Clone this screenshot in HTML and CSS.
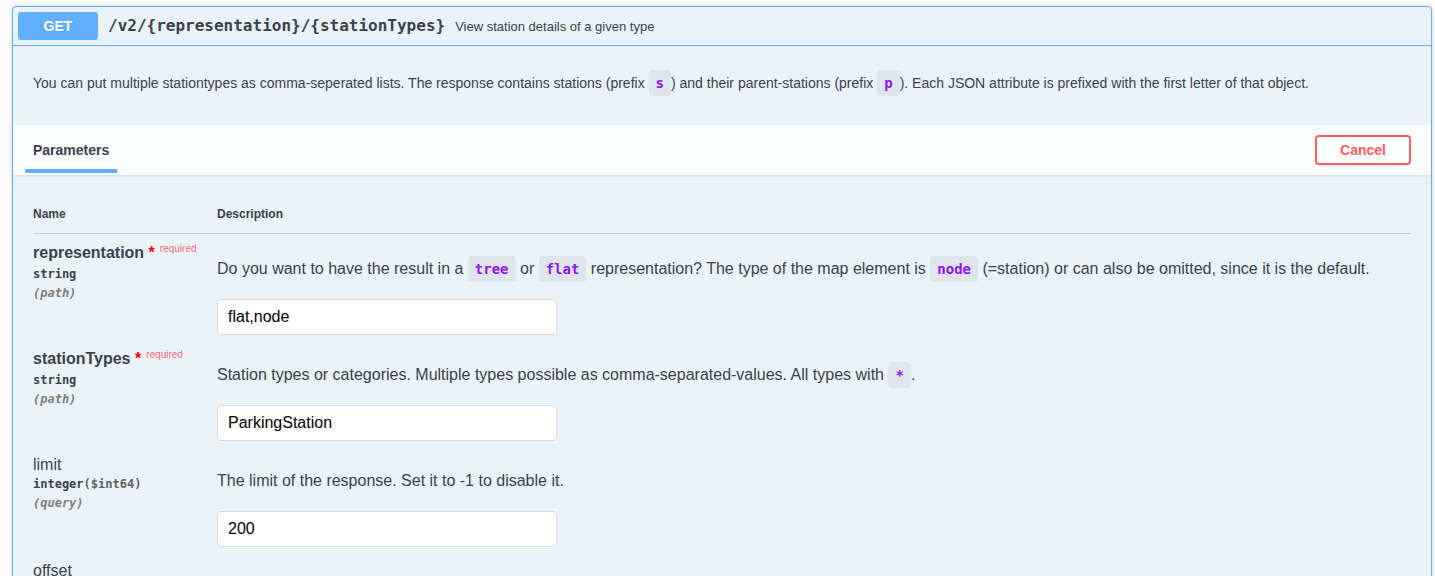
FILE: index.html
```html
<!DOCTYPE html>
<html lang="en">
<head>
<meta charset="utf-8">
<title>GET /v2/{representation}/{stationTypes}</title>
<link rel="stylesheet" href="styles.css">
</head>
<body>
<div class="opblock">
  <div class="summary">
    <span class="method">GET</span>
    <span class="path">/v2/{representation}/{stationTypes}</span>
    <span class="summary-desc">View station details of a given type</span>
  </div>
  <div class="desc-wrap">
    <p>You can put multiple stationtypes as comma-seperated lists. The response contains stations (prefix <code>s</code>) and their parent-stations (prefix <code>p</code>). Each JSON attribute is prefixed with the first letter of that object.</p>
  </div>
  <div class="section-header">
    <div class="tab"><h4><span>Parameters</span></h4></div>
    <button class="btn-cancel">Cancel</button>
  </div>
  <div class="params">
    <div class="params-head">
      <div>Name</div>
      <div>Description</div>
    </div>
    <div class="prow">
      <div class="pcol-name">
        <div class="pname required">representation<span class="star">&nbsp;*</span></div>
        <div class="ptype">string</div>
        <div class="pin">(path)</div>
      </div>
      <div class="pcol-desc">
        <p>Do you want to have the result in a <code>tree</code> or <code>flat</code> representation? The type of the map element is <code>node</code> (=station) or can also be omitted, since it is the default.</p>
        <input class="pinput" type="text" value="flat,node">
      </div>
    </div>
    <div class="prow">
      <div class="pcol-name">
        <div class="pname required">stationTypes<span class="star">&nbsp;*</span></div>
        <div class="ptype">string</div>
        <div class="pin">(path)</div>
      </div>
      <div class="pcol-desc">
        <p>Station types or categories. Multiple types possible as comma-separated-values. All types with <code>*</code>.</p>
        <input class="pinput" type="text" value="ParkingStation">
      </div>
    </div>
    <div class="prow">
      <div class="pcol-name">
        <div class="pname">limit</div>
        <div class="ptype">integer<span class="pformat">($int64)</span></div>
        <div class="pin">(query)</div>
      </div>
      <div class="pcol-desc">
        <p>The limit of the response. Set it to -1 to disable it.</p>
        <input class="pinput" type="text" value="200">
      </div>
    </div>
    <div class="prow">
      <div class="pcol-name">
        <div class="pname">offset</div>
        <div class="ptype">integer<span class="pformat">($int64)</span></div>
        <div class="pin">(query)</div>
      </div>
      <div class="pcol-desc">
        <p>The offset of the response. Set it to 0 to start at the first element.</p>
        <input class="pinput" type="text" value="0">
      </div>
    </div>
  </div>
</div>
</body>
</html>
```

FILE: styles.css
```css
html, body {
  margin: 0;
  padding: 0;
}
body {
  background: #fafafa;
  font-family: "Liberation Sans", Arial, sans-serif;
  color: #3b4151;
  padding: 6px 3px 0 12px;
  overflow: hidden;
}
.opblock {
  width: 1420px;
  box-sizing: border-box;
  border: 1px solid #61affe;
  border-radius: 4px;
  background: rgba(97, 175, 254, 0.1);
  box-shadow: 0 0 3px rgba(0, 0, 0, 0.19);
}
.summary {
  display: flex;
  align-items: center;
  padding: 5px;
  border-bottom: 1px solid #61affe;
}
.method {
  display: inline-block;
  min-width: 80px;
  padding: 6px 0;
  background: #61affe;
  border-radius: 3px;
  color: #fff;
  font-size: 14px;
  font-weight: 700;
  line-height: 16px;
  text-align: center;
  text-shadow: 0 1px 0 rgba(0, 0, 0, 0.1);
}
.path {
  font-family: "DejaVu Sans Mono", monospace;
  font-size: 16px;
  font-weight: 700;
  color: #3b4151;
  padding: 0 10px;
  line-height: 20px;
}
.summary-desc {
  font-size: 13px;
  color: #3b4151;
}
.desc-wrap {
  padding: 15px 20px;
  margin: 0 0 5px;
  font-size: 14px;
}
.desc-wrap p {
  margin: 14px 0;
  line-height: 16px;
}
code {
  font-family: "DejaVu Sans Mono", monospace;
  font-size: 14px;
  font-weight: 700;
  color: #9012fe;
  background: rgba(0, 0, 0, 0.05);
  padding: 5px 7px;
  border-radius: 4px;
}
.section-header {
  display: flex;
  align-items: center;
  justify-content: space-between;
  min-height: 50px;
  box-sizing: border-box;
  padding: 8px 20px;
  background: rgba(255, 255, 255, 0.8);
  box-shadow: 0 1px 2px rgba(0, 0, 0, 0.1);
}
.tab h4 {
  margin: 0;
  font-size: 14px;
  font-weight: 700;
  line-height: 16px;
  color: #3b4151;
}
.tab h4 span {
  position: relative;
  display: inline-block;
}
.tab h4 span::after {
  content: "";
  position: absolute;
  left: 50%;
  bottom: -15px;
  width: 120%;
  height: 4px;
  transform: translateX(-50%);
  background: #61affe;
}
.btn-cancel {
  font-family: "Liberation Sans", Arial, sans-serif;
  font-size: 14px;
  font-weight: 700;
  line-height: 16px;
  padding: 5px 23px;
  border: 2px solid #ff6060;
  border-radius: 4px;
  color: #ff6060;
  background: transparent;
  box-shadow: 0 1px 2px rgba(0, 0, 0, 0.1);
}
.params {
  padding: 20px 20px;
}
.params-head {
  display: grid;
  grid-template-columns: 184px 1fr;
  border-bottom: 1px solid rgba(59, 65, 81, 0.2);
  font-size: 12px;
  font-weight: 700;
  line-height: 14px;
}
.params-head > div {
  padding: 12px 0;
}
.prow {
  display: grid;
  grid-template-columns: 184px 1fr;
  padding: 10px 0 5px;
}
.pname {
  font-size: 16px;
  line-height: 18px;
}
.pname.required {
  font-weight: 700;
}
.pname .star {
  color: red;
}
.pname.required::after {
  content: "required";
  font-size: 10px;
  font-weight: 400;
  color: rgba(255, 0, 0, 0.6);
  padding: 5px;
  position: relative;
  top: -6px;
}
.ptype {
  font-family: "DejaVu Sans Mono", monospace;
  font-size: 12px;
  font-weight: 700;
  line-height: 14px;
  padding: 3px 0 5px;
}
.pformat {
  color: #606060;
}
.pin {
  font-family: "DejaVu Sans Mono", monospace;
  font-size: 12px;
  font-style: italic;
  font-weight: 700;
  line-height: 14px;
  color: #808080;
}
.pcol-desc p {
  margin: 16px 0 0;
  font-size: 16px;
  line-height: 18px;
}
.pinput {
  display: block;
  margin-top: 21px;
  width: 340px;
  height: 36px;
  box-sizing: border-box;
  padding: 8px 10px;
  border: 1px solid #d9d9d9;
  border-radius: 4px;
  background: #fff;
  font-family: "Liberation Sans", Arial, sans-serif;
  font-size: 16px;
  color: #000;
}
```
